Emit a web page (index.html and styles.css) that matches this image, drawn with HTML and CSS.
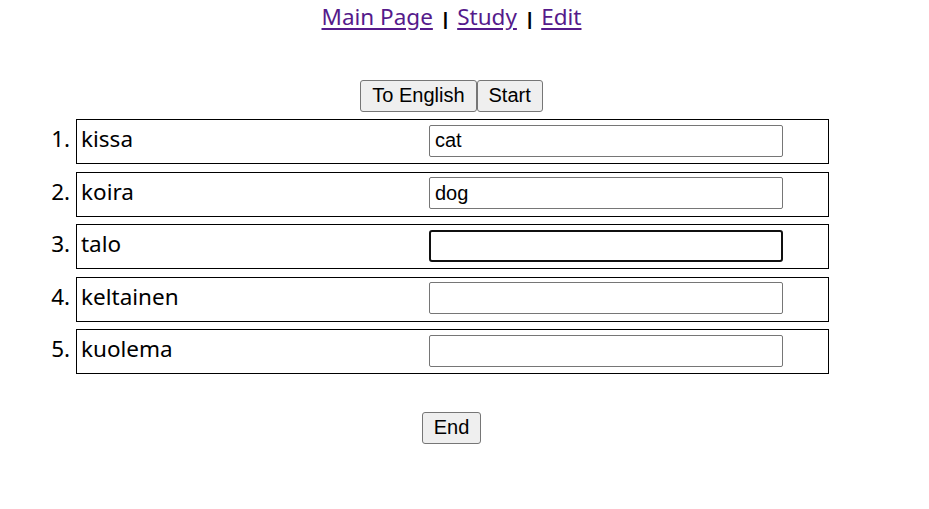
FILE: index.html
```html
<!DOCTYPE html>
<html lang="en">
<head>
<meta charset="utf-8">
<title>Study</title>
<link rel="stylesheet" href="styles.css">
</head>
<body>
<div class="page">
  <nav class="nav"><a class="nav-link" href="#">Main Page</a><span class="sep">|</span><a class="nav-link" href="#">Study</a><span class="sep">|</span><a class="nav-link" href="#">Edit</a></nav>
  <div class="controls"><button class="btn">To English</button><button class="btn">Start</button></div>
  <ol class="words">
    <li class="word-row"><div class="row-inner"><span class="term">kissa</span><input class="answer" type="text" value="cat"></div></li>
    <li class="word-row"><div class="row-inner"><span class="term">koira</span><input class="answer" type="text" value="dog"></div></li>
    <li class="word-row"><div class="row-inner"><span class="term">talo</span><input class="answer answer-active" type="text" value="" autofocus></div></li>
    <li class="word-row"><div class="row-inner"><span class="term">keltainen</span><input class="answer" type="text" value=""></div></li>
    <li class="word-row"><div class="row-inner"><span class="term">kuolema</span><input class="answer" type="text" value=""></div></li>
  </ol>
  <div class="footer"><button class="btn">End</button></div>
</div>
</body>
</html>
```

FILE: styles.css
```css
html, body {
  margin: 0;
  padding: 0;
  background: #fff;
}
body {
  font-family: "Noto Sans", "Open Sans", sans-serif;
  color: #000;
}
.page {
  width: 887px;
  margin: 0 8px;
}
.nav {
  display: flex;
  justify-content: center;
  align-items: baseline;
  padding-top: 0;
  height: 35px;
  font-size: 22.5px;
  line-height: 34px;
}
.nav-link {
  color: #551a8b;
  text-decoration: underline;
  text-underline-offset: 3px;
}
.sep {
  font-family: "Liberation Sans", Arial, sans-serif;
  font-size: 19px;
  font-weight: bold;
  margin: 0 9px 0 10px;
}
.controls {
  display: flex;
  justify-content: center;
  margin-top: 45px;
}
.btn {
  font-family: "Liberation Sans", Arial, sans-serif;
  font-size: 20px;
  line-height: 23px;
  color: #000;
  background: #efefef;
  border: 1px solid #767676;
  border-radius: 3px;
  padding: 3px 11px 4px 11px;
  margin: 0;
}
.words {
  width: 753px;
  margin: 7px 0 0 68px;
  padding: 0;
  font-size: 22.5px;
}
.word-row {
  display: list-item;
  border: 1px solid #000;
  box-sizing: border-box;
  height: 45px;
  margin-bottom: 7.5px;
}
.row-inner {
  display: flex;
  align-items: baseline;
  padding: 3px 0 0 4px;
}
.term {
  width: 348px;
  flex: none;
}
.answer {
  width: 354px;
  height: 32px;
  box-sizing: border-box;
  font-family: "Liberation Sans", Arial, sans-serif;
  font-size: 20px;
  padding: 1px 5px;
  border: 1px solid #767676;
  border-radius: 2px;
  margin: 0;
  color: #000;
}
.answer-active,
.answer:focus {
  border: 2px solid #101010;
  border-radius: 3px;
  outline: none;
  padding: 0 4px;
}
.footer {
  display: flex;
  justify-content: center;
  margin-top: 38px;
}
```
